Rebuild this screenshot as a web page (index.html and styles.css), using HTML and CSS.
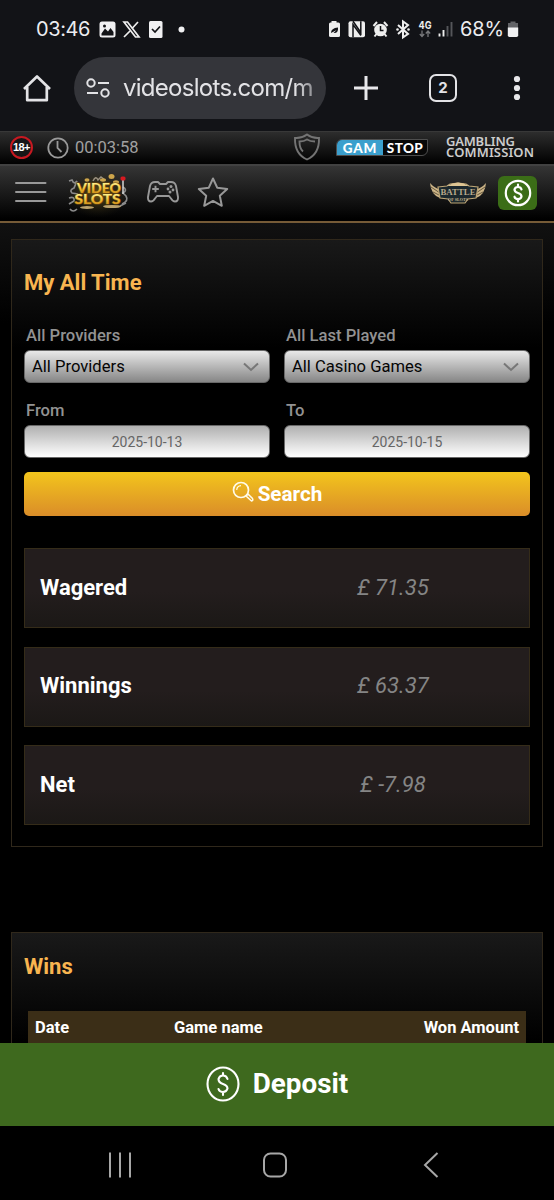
FILE: index.html
```html
<!DOCTYPE html>
<html lang="en">
<head>
<meta charset="utf-8">
<title>My All Time</title>
<link rel="stylesheet" href="styles.css">
</head>
<body>
<div class="screen">
  <div class="status">
    <span class="clock">03:46</span>
    <svg class="status-left" viewBox="97 15 92 28" width="92" height="28">
      <rect x="99.500" y="21.500" width="16" height="16" rx="2.500" fill="#f0f0f2"/>
      <path d="M101.500 33.500l3.500-5 3 3 2.500-3.500 3 4v3.500h-12z" fill="#121317"/><circle cx="104.500" cy="26" r="1.500" fill="#121317"/>
      <path d="M124 22h3.500l11.500 15h-3.500z" fill="none" stroke="#eee" stroke-width="1.700"/><path d="M138 22l-6 6.500M130 31l-6 6" stroke="#eee" stroke-width="1.700"/>
      <rect x="149" y="21" width="13.500" height="17" rx="1.500" fill="#f0f0f2"/><path d="M152 29l3 3 5-5.500" fill="none" stroke="#121317" stroke-width="1.700"/>
      <circle cx="181.500" cy="29.500" r="3" fill="#f0f0f2"/>
    </svg>
    <svg class="status-right" viewBox="326 15 132 28" width="132" height="28">
      <path d="M331.500 23v-2h5v2z" fill="#eee"/>
      <rect x="329" y="22.500" width="11" height="14.500" rx="1.500" fill="#eee"/><path d="M331 33q0-5 7-5.500.5 6-4.500 5.500l3-3" fill="#121317"/>
      <rect x="348.500" y="21.200" width="16.500" height="16" rx="2" fill="#eee"/>
      <path d="M353 37.200V24.500l8 11M353 21.200l7.800 11.300V21.200" fill="none" stroke="#121317" stroke-width="1.500"/>
      <circle cx="380.500" cy="30" r="6.300" fill="#eee"/><path d="M373.500 26l3.500-4M387.500 26l-3.500-4M376.500 34l-2 2.500M384.500 34l2 2.500" stroke="#eee" stroke-width="2"/><path d="M380.500 26v4.500h3" fill="none" stroke="#121317" stroke-width="1.500"/>
      <path d="M398 25l10 9-5 3.300V21.500l5 3.500-10 9" fill="none" stroke="#eee" stroke-width="2"/><circle cx="397.500" cy="29.500" r="1.300" fill="#eee"/><circle cx="408.500" cy="29.500" r="1.300" fill="#eee"/>
      <text class="net" x="418.500" y="28.500" textLength="13" lengthAdjust="spacingAndGlyphs">4G</text>
      <path d="M422 30.500v6M419.800 34l2.200 2.500 2.200-2.500M428 37v-6M425.800 33.500l2.200-2.500 2.200 2.500" fill="none" stroke="#77787b" stroke-width="1.300"/>
      <path d="M439.500 33.500V36.500M443.500 30v6.500" stroke="#eee" stroke-width="1.900"/><path d="M447.500 26v10.500M451.500 22v14.500" stroke="#55565a" stroke-width="1.900"/>
    </svg>
    <span class="battery-text">68%</span>
    <svg class="battery" viewBox="0 0 12 18" width="12" height="18"><path d="M3.500 1.500h5V3H11v5H1V3h2.500z" fill="#626367"/><path d="M.8 7.500h10.400v7.800q0 1.700-1.700 1.700h-7Q.8 17 .8 15.300z" fill="#f0f0f2"/></svg>
  </div>

  <div class="browser">
    <svg class="home" viewBox="0 0 30 30" width="30" height="30"><path d="M2 16L15 3.500 28 16M5.200 14v13.200h19.600V14" fill="none" stroke="#e3e3e6" stroke-width="2.700" stroke-linejoin="round"/></svg>
    <div class="url">
      <svg viewBox="0 0 24 20" width="24" height="20"><g fill="none" stroke="#e3e3e6" stroke-width="2"><circle cx="5" cy="5" r="3.700"/><circle cx="19" cy="15" r="3.700"/><path d="M12 5h11M1 15h11"/></g></svg>
      <span>videoslots.com/m</span>
    </div>
    <svg class="plus" viewBox="0 0 24 24" width="24" height="24"><path d="M12 0v24M0 12h24" stroke="#e8e8eb" stroke-width="3"/></svg>
    <span class="tabs">2</span>
    <svg class="dots" viewBox="0 0 8 26" width="8" height="26"><g fill="#e8e8eb"><circle cx="4" cy="4" r="3.100"/><circle cx="4" cy="13" r="3.100"/><circle cx="4" cy="22" r="3.100"/></g></svg>
  </div>

  <div class="compliance">
    <span class="age">18+</span>
    <svg class="timer" viewBox="0 0 22 22" width="22" height="22"><g fill="none" stroke="#9a9a9a" stroke-width="1.800"><circle cx="11" cy="11" r="9.700"/><path d="M10.500 4v7l4 4"/></g></svg>
    <span class="session">00:03:58</span>
    <svg class="shield" viewBox="0 0 28 28" width="28" height="28"><g fill="none" stroke="#747474" stroke-width="1.900"><path d="M14 1.500q5.500 4 12 3.500.5 16-12 21.500Q1.500 21 2 5q6.500.5 12-3.500z"/><path d="M22 8.500q-5 0-8-2-3 2-7.500 2 0 7 3.500 10"/></g></svg>
    <span class="gamstop"><b>GAM</b><i>STOP</i></span>
    <svg class="commission" viewBox="0 0 92 26" width="92" height="26"><text x="1" y="10.500" textLength="69">GAMBLING</text><text x="1" y="22" textLength="88">COMMISSION</text></svg>
  </div>

  <div class="sitebar">
    <svg class="menu" viewBox="0 0 32 24" width="32" height="24"><path d="M1 3h29.500M1 12h29.500M1 21h29.500" stroke="#999" stroke-width="2" stroke-linecap="round"/></svg>
    <svg class="logo" viewBox="66 168 64 48" width="64" height="48">
      <defs>
        <radialGradient id="glow"><stop offset="0" stop-color="#6b5515"/><stop offset="1" stop-color="#1c1a10" stop-opacity="0"/></radialGradient>
        <linearGradient id="gold" x1="0" y1="0" x2="0" y2="1"><stop offset=".2" stop-color="#fff08a"/><stop offset=".6" stop-color="#ecb62d"/><stop offset="1" stop-color="#b8760f"/></linearGradient>
      </defs>
      <ellipse cx="98" cy="193" rx="32" ry="24" fill="url(#glow)"/>
      <g fill="none" stroke="#8a8a8a" stroke-width="1.700"><path d="M69 180l3-1q2 5 5 1l-3 7q-5 2-2 5l6 1M69 197q6-2 5 3l-5 3M70 208q3 4 7 0M123 186q5 3 0 6l3 3q3 5-4 8M120 205l6-3"/><path d="M93 180q3-6 5-1l3-3 4 3" stroke="#9b9180" stroke-width="1.500"/></g>
      <g fill="#cda54b"><ellipse cx="111.500" cy="175.500" rx="3" ry="2.500"/><ellipse cx="103" cy="179" rx="3" ry="1.700"/><ellipse cx="87" cy="179" rx="2.500" ry="1.800"/><ellipse cx="116" cy="181" rx="3" ry="1.800"/></g>
      <g fill="#bca36d"><ellipse cx="87" cy="206.500" rx="7" ry="1.500"/><ellipse cx="112" cy="205.500" rx="9" ry="1.600"/></g>
      <path d="M123 179v14" stroke="#d6d6d6" stroke-width="1.500"/><rect x="120.500" y="175.500" width="5" height="4" rx="1.500" fill="#d71920"/>
      <text class="logo-word" x="77" y="192" textLength="44" lengthAdjust="spacingAndGlyphs" fill="url(#gold)">VIDEO</text><text class="logo-word" x="74.500" y="203" textLength="46" lengthAdjust="spacingAndGlyphs" fill="url(#gold)">SLOTS</text>
    </svg>
    <svg class="gamepad" viewBox="0 0 32 24" width="32" height="24"><g fill="none" stroke="#989898" stroke-width="1.900" stroke-linejoin="round"><path d="M8 2h3l2 2h6l2-2h3q4 0 5 4l2 11q.3 4.500-3 4.500-2.200 0-4-3l-2-2.500H10l-2 2.500q-1.800 3-4 3Q.7 21.500 1 17L3 6q1-4 5-4z"/><path d="M8.500 5.700v6.600M5.200 9h6.600"/></g><g fill="#989898"><circle cx="24" cy="6.500" r="1.500"/><circle cx="21" cy="9" r="1.400"/><circle cx="26" cy="10" r="1.400"/><circle cx="23" cy="12" r="1.500"/></g></svg>
    <svg class="star" viewBox="0 0 32 32" width="32" height="32"><path d="M16 2.500l4.200 9.200 10 1.300-7.400 6.800 2 10L16 24.900l-8.800 4.900 2-10L1.800 13l10-1.300z" fill="none" stroke="#989898" stroke-width="2" stroke-linejoin="round"/></svg>
    <svg class="battle" viewBox="429 180 58 27" width="58" height="27">
      <path d="M430 183q1 12 10 15l3-8q-8-1-13-7zM486 183q-1 12-10 15l-3-8q8-1 13-7z" fill="#cdb587"/><path d="M431 187l9 6M433 192l8 4M485 187l-9 6M483 192l-8 4" stroke="#66583f"/>
      <path d="M438 187l9-1 3-2 8-1 8 1 3 2 9 1-2 11-8 1-3 4h-14l-3-4-8-1z" fill="#1c282d" stroke="#bda575" stroke-width="1.200"/><path d="M447 186q11-7 22 0z" fill="#dec593"/>
      <text class="battle-word" x="440.500" y="195" textLength="35" lengthAdjust="spacingAndGlyphs">BATTLE</text><text class="slots-word" x="448" y="201" textLength="20" lengthAdjust="spacingAndGlyphs">OF SLOTS</text>
    </svg>
    <span class="money"><svg viewBox="0 0 30 30" width="30" height="30"><g fill="none" stroke="#fff" stroke-width="2.200"><circle cx="15" cy="15" r="12.200"/><path d="M18.500 11.500q-.5-2.500-3.500-2.500t-3.500 2.500q0 2.500 3.500 3.500t3.500 3.500q-.5 2.500-3.500 2.500t-3.500-2.300M15 6.500V9M15 21v2.500" stroke-linecap="round"/></g></svg></span>
  </div>

  <main class="page">
    <section class="panel summary">
      <h1>My All Time</h1>
      <div class="filters">
        <div class="field"><span class="label">All Providers</span><div class="select"><span>All Providers</span><svg viewBox="0 0 16 10" width="16" height="10"><path d="M1 1.500l7 6.500 7-6.500" fill="none" stroke="#777" stroke-width="2"/></svg></div></div>
        <div class="field"><span class="label">All Last Played</span><div class="select"><span>All Casino Games</span><svg viewBox="0 0 16 10" width="16" height="10"><path d="M1 1.500l7 6.500 7-6.500" fill="none" stroke="#777" stroke-width="2"/></svg></div></div>
        <div class="field"><span class="label">From</span><div class="date">2025-10-13</div></div>
        <div class="field"><span class="label">To</span><div class="date">2025-10-15</div></div>
      </div>
      <div class="search"><svg viewBox="0 0 22 22" width="22" height="22"><g fill="none" stroke="#fffbe9"><circle cx="9" cy="9" r="7.500" stroke-width="1.700"/><path d="M4.700 9Q5 5 9 4.700" stroke-width="1.200"/><path d="M14 15l2-2 4.500 4.500q1 2-1 2.500z" stroke-width="1.500"/></g></svg><span>Search</span></div>
      <div class="stats">
        <div class="stat"><b>Wagered</b><i>£ 71.35</i></div>
        <div class="stat"><b>Winnings</b><i>£ 63.37</i></div>
        <div class="stat"><b>Net</b><i>£ -7.98</i></div>
      </div>
    </section>
    <section class="panel wins">
      <h2>Wins</h2>
      <div class="table-head"><span>Date</span><span>Game name</span><span>Won Amount</span></div>
    </section>
  </main>

  <div class="deposit"><svg viewBox="0 0 34 36" width="34" height="36"><g fill="none" stroke="#fff" stroke-width="2.100"><ellipse cx="17" cy="18" rx="15.500" ry="16.500"/><path d="M21.500 13q-1-3.500-4.500-3.500t-4.500 3.500q0 3.500 4.500 5t4.500 4.500q-1 3.500-4.500 3.500t-4.500-3M17 7v2.500M17 26v3" stroke-linecap="round"/></g></svg><span>Deposit</span></div>
  <div class="nav"><svg viewBox="0 0 24 26" width="24" height="26"><path d="M2 .5v25M12 .5v25M22 .5v25" stroke="#a7a7a7" stroke-width="2"/></svg><svg viewBox="0 0 26 26" width="26" height="26"><rect x="2" y="1.500" width="22" height="23" rx="6.500" fill="none" stroke="#a7a7a7" stroke-width="2"/></svg><svg viewBox="0 0 16 26" width="16" height="26"><path d="M14.500 1L2 13l12.500 12" fill="none" stroke="#a7a7a7" stroke-width="2"/></svg></div>
</div>
</body>
</html>
```
FILE: styles.css
```css
* { box-sizing: border-box; }
body { margin: 0; background: #000; font-family: Roboto, sans-serif; color: #fff; }
svg { display: block; flex: none; }
.screen { width: 554px; height: 1200px; display: flex; flex-direction: column; overflow: hidden; white-space: nowrap; }
.screen > * { flex: none; }

.status { height: 58px; display: flex; align-items: center; background: #121317; padding-left: 36px; font: 20px/28px Inter, sans-serif; color: #ececef; }
.clock { width: 61px; letter-spacing: -.4px; }
.status-right { margin-left: 137px; }
.net { font: 700 10.500px Inter, sans-serif; fill: #eee; }
.battery-text { width: 47px; margin-left: 2px; letter-spacing: -.2px; }

.browser { height: 73px; display: flex; align-items: flex-start; background: #121317; color: #e3e3e6; }
.home { margin: 15px 22px 0; }
.url { width: 252px; height: 62px; margin-top: -1px; border-radius: 31px; background: #34353a; display: flex; align-items: center; padding: 0 12px; }
.url span { width: 194px; margin-left: 13px; font: 24px/34px Inter, sans-serif; letter-spacing: -.72px; mask-image: linear-gradient(90deg, #000 90%, rgba(0,0,0,.5)); }
.plus { margin: 18px 0 0 28px; }
.tabs { width: 28px; height: 28px; margin: 16px 0 0 51px; border: 2.500px solid #e3e3e6; border-radius: 7px; text-align: center; font: 700 15px/23px Inter, sans-serif; }
.dots { margin: 17px 0 0 56px; }

.compliance { height: 33px; display: flex; align-items: center; background: linear-gradient(#2d2d2d, #000); border-top: 1px solid #383838; padding-left: 10px; }
.age { width: 23px; height: 23px; margin-top: -1px; border: 2px solid #c71921; border-radius: 50%; background: #171717; font: 700 11px/19px "Liberation Sans", sans-serif; text-align: center; letter-spacing: -.6px; }
.timer { margin: -1px 0 0 14px; }
.session { width: 65px; margin: -2px 0 0 6px; font-size: 16.500px; color: #a1a1a1; }
.shield { margin-left: 153px; margin-top: -3px; }
.gamstop { width: 92px; height: 17px; margin: -2px 0 0 15px; border: 1px solid #4e4e4e; border-radius: 6px 0 6px 0; display: flex; overflow: hidden; background: #080808; font: 700 13.500px/16px Lato, sans-serif; }
.gamstop b, .gamstop i { font-style: normal; font-weight: 900; letter-spacing: .8px; text-align: center; }
.gamstop b { width: 46px; background: #3b9fcd; }
.gamstop i { flex: 1; letter-spacing: .4px; }
.commission { margin: -1px 0 0 17px; font: 600 13px "Noto Sans", sans-serif; fill: #ccc; }

.sitebar { height: 59px; display: flex; align-items: center; background: linear-gradient(#353535, #000 96%); border-top: 2px solid #414141; border-bottom: 2px solid #765b37; padding-left: 15px; }
.menu { margin-top: -3px; }
.logo { margin: -2px 0 0 19px; }
.gamepad { margin: -4px 0 0 17px; }
.star { margin: -4px 0 0 18px; }
.battle { margin: -1px 0 0 200px; }
.money { width: 39px; height: 34px; margin: -2px 0 0 11px; border-radius: 6px; background: #3b6d17; display: grid; place-items: center; }
.logo-word { font: 900 13px Lato, sans-serif; stroke: #704a0c; stroke-width: 1.200px; paint-order: stroke; }
.battle-word { font: 700 8px "Liberation Serif", serif; fill: #b8a98c; }
.slots-word { font: 700 4.500px "Liberation Serif", serif; fill: #c7b68f; }

.page { height: 820px; overflow: hidden; padding: 16px 11px 0; background: linear-gradient(#111 0, #000 100px); }
.panel { border: 1px solid #30281b; background: linear-gradient(#191919, #000 108px); }
.summary { height: 608px; padding: 30px 12px 0; }
h1, h2 { margin: 0; font-weight: 700; font-size: 22px; line-height: 26px; color: #f8b550; }
.filters { display: grid; grid-template-columns: 246px 246px; column-gap: 14px; margin-top: 30px; }
.field { height: 75px; }
.label { display: block; height: 24px; padding-left: 2px; font-size: 16.600px; line-height: 19px; font-weight: 500; color: #929292; }
.select, .date { height: 33px; border: 1px solid #686868; border-radius: 6px; display: flex; align-items: center; }
.select { justify-content: space-between; padding: 0 10px 0 7px; background: linear-gradient(#e8e8e8, #868686); color: #050505; font-size: 16.600px; }
.date { justify-content: center; background: linear-gradient(#b0b0b0, #fff); color: #666; font-size: 14px; }
.search { height: 44px; margin-top: -4px; border-radius: 5px; background: linear-gradient(#f3c51c, #da8d29); display: flex; align-items: center; justify-content: center; gap: 4px; font-size: 20.700px; font-weight: 700; }
.search svg { margin-top: -4px; }
.stats { display: grid; grid-auto-rows: 80px; gap: 18.500px; margin-top: 32px; }
.stat { display: grid; grid-template-columns: 232px 1fr; align-items: center; padding: 0 0 2px 15px; border: 1px solid #352c19; background: linear-gradient(#231d1d 55%, #1b1816); }
.stat b { font-size: 22px; }
.stat i { font-size: 22px; font-weight: 400; color: #858585; text-align: center; padding-right: 15px; }
.wins { height: 200px; margin-top: 85px; padding: 21px 16px 0; }
.wins h2 { margin-left: -4px; }
.table-head { height: 60px; margin-top: 31px; display: grid; grid-template-columns: 139px 1fr auto; padding: 7px 7px 0; background: #3b2e17; font-size: 16.500px; line-height: 19px; font-weight: 700; }

.deposit { height: 83px; background: #3e691e; display: flex; align-items: center; justify-content: center; gap: 13px; padding-bottom: 2px; font-size: 27.800px; font-weight: 700; }
.nav { height: 74px; display: flex; align-items: center; padding: 4px 115px 0 108px; gap: 130px; }
.nav svg:last-child { margin-left: 5px; }
```
